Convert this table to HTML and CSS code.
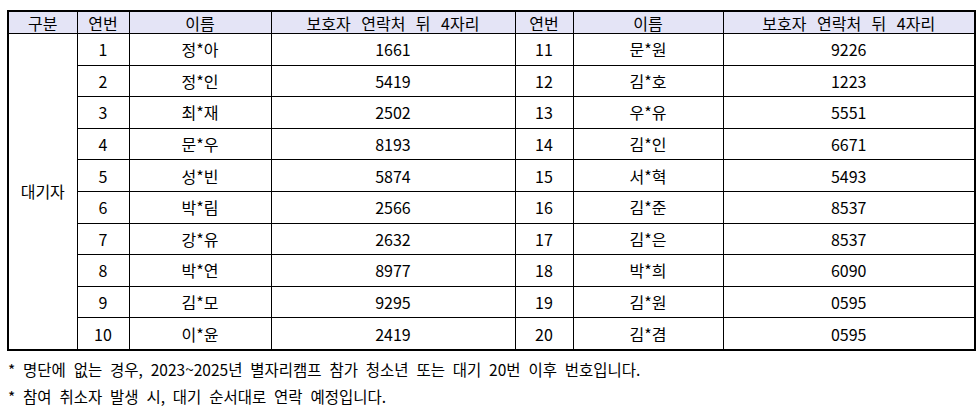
FILE: index.html
```html
<!DOCTYPE html>
<html lang="ko">
<head>
<meta charset="utf-8">
<link rel="stylesheet" href="styles.css">
</head>
<body>
<table class="list">
  <colgroup>
    <col class="c-group"><col class="c-no"><col class="c-name"><col class="c-phone">
    <col class="c-no2"><col class="c-name2"><col class="c-phone2">
  </colgroup>
  <thead>
    <tr><th>구분</th><th>연번</th><th>이름</th><th>보호자 연락처 뒤 4자리</th><th>연번</th><th>이름</th><th>보호자 연락처 뒤 4자리</th></tr>
  </thead>
  <tbody>
    <tr><td rowspan="10" class="group">대기자</td><td>1</td><td>정*아</td><td>1661</td><td>11</td><td>문*원</td><td>9226</td></tr>
    <tr><td>2</td><td>정*인</td><td>5419</td><td>12</td><td>김*호</td><td>1223</td></tr>
    <tr><td>3</td><td>최*재</td><td>2502</td><td>13</td><td>우*유</td><td>5551</td></tr>
    <tr><td>4</td><td>문*우</td><td>8193</td><td>14</td><td>김*인</td><td>6671</td></tr>
    <tr><td>5</td><td>성*빈</td><td>5874</td><td>15</td><td>서*혁</td><td>5493</td></tr>
    <tr><td>6</td><td>박*림</td><td>2566</td><td>16</td><td>김*준</td><td>8537</td></tr>
    <tr><td>7</td><td>강*유</td><td>2632</td><td>17</td><td>김*은</td><td>8537</td></tr>
    <tr><td>8</td><td>박*연</td><td>8977</td><td>18</td><td>박*희</td><td>6090</td></tr>
    <tr><td>9</td><td>김*모</td><td>9295</td><td>19</td><td>김*원</td><td>0595</td></tr>
    <tr><td>10</td><td>이*윤</td><td>2419</td><td>20</td><td>김*겸</td><td>0595</td></tr>
  </tbody>
</table>
<p class="note">* 명단에 없는 경우, 2023~2025년 별자리캠프 참가 청소년 또는 대기 20번 이후 번호입니다.</p>
<p class="note">* 참여 취소자 발생 시, 대기 순서대로 연락 예정입니다.</p>
</body>
</html>
```

FILE: styles.css
```css
html, body {
  margin: 0;
  padding: 0;
  background: #ffffff;
}
body {
  padding: 10px 0 0 7px;
  font-family: "Noto Sans CJK KR", "Noto Sans", sans-serif;
  color: #000000;
}
.list {
  border-collapse: collapse;
  table-layout: fixed;
  width: 969px;
  border: 2px solid #000;
  font-size: 16px;
  word-spacing: 6px;
}
.c-group { width: 69px; }
.c-no { width: 52px; }
.c-name { width: 142px; }
.c-phone { width: 244px; }
.c-no2 { width: 58px; }
.c-name2 { width: 150px; }
.c-phone2 { width: 252px; }
.list th, .list td {
  border: 1px solid #000;
  padding: 0;
  text-align: center;
  vertical-align: middle;
  font-weight: normal;
  line-height: 20px;
}
.list th {
  background: #e4e4f6;
  height: 21px;
}
.list td {
  height: 30.6px;
}
.note {
  margin: 0;
  padding-left: 1px;
  font-size: 15.5px;
  line-height: 27px;
  word-spacing: 3.5px;
}
.list + .note {
  margin-top: 5px;
}
```
